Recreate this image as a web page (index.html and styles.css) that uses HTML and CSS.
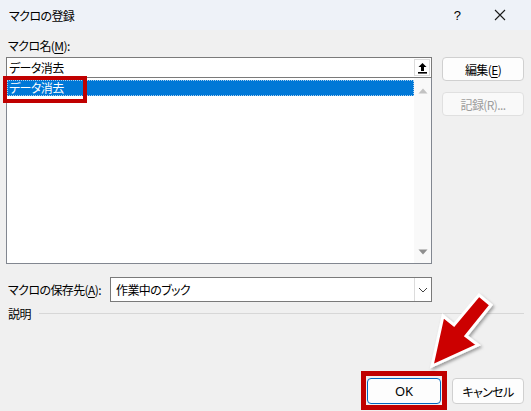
FILE: index.html
```html
<!DOCTYPE html>
<html lang="ja">
<head>
<meta charset="utf-8">
<title>マクロの登録</title>
<link rel="stylesheet" href="styles.css">
</head>
<body>
<div class="window">
  <div class="titlebar">
    <div class="title">マクロの登録</div>
    <div class="tb-btn help">?</div>
    <div class="tb-btn close">
      <svg width="12" height="12" viewBox="0 0 12 12"><path d="M1 1L11 11M11 1L1 11" stroke="#1a1a1a" stroke-width="1.1" fill="none"/></svg>
    </div>
  </div>
  <div class="content">
    <div class="label">マクロ名(<u>M</u>):</div>
    <div class="main">
      <div class="left">
        <div class="input">
          <span class="input-text">データ消去</span>
          <div class="collapse-btn">
            <svg width="11" height="12" viewBox="0 0 11 12"><path d="M5.5 1L1.5 5H4V9H7V5H9.5Z" fill="#000"/><rect x="1" y="10" width="9" height="1.6" fill="#000"/></svg>
          </div>
        </div>
        <div class="list">
          <div class="items">
            <div class="item selected">データ消去</div>
          </div>
          <div class="scrollbar">
            <svg width="10" height="6" viewBox="0 0 10 6"><path d="M5 0.5L9.5 5.5H0.5Z" fill="#c2c2c2"/></svg>
            <svg width="10" height="6" viewBox="0 0 10 6"><path d="M5 5.5L9.5 0.5H0.5Z" fill="#8f8f8f"/></svg>
          </div>
        </div>
      </div>
      <div class="right">
        <div class="btn">編集(<u>E</u>)</div>
        <div class="btn disabled">記録(R)...</div>
      </div>
    </div>
    <div class="store-row">
      <div class="store-label">マクロの保存先(<u>A</u>):</div>
      <div class="combo">
        <span class="combo-text">作業中のブック</span>
        <div class="combo-btn">
          <svg width="10" height="6" viewBox="0 0 10 6"><path d="M1 1L5 5L9 1" stroke="#444" stroke-width="1" fill="none"/></svg>
        </div>
      </div>
    </div>
    <div class="desc-row">
      <span>説明</span>
      <div class="desc-line"></div>
    </div>
  </div>
  <div class="footer">
    <div class="btn ok">OK</div>
    <div class="btn cancel">キャンセル</div>
  </div>

  <div class="mark mark-item"></div>
  <div class="mark mark-ok"></div>
  <svg class="arrow" width="531" height="411" viewBox="0 0 531 411">
    <defs>
      <filter id="sh" x="-20%" y="-20%" width="140%" height="140%">
        <feDropShadow dx="1.5" dy="2" stdDeviation="1.5" flood-color="#000" flood-opacity="0.35"/>
      </filter>
    </defs>
    <polygon points="432,366 443,316 454,325 479,295 491,305 466,336 478,345" fill="#cc0000" stroke="#fff" stroke-width="3" stroke-linejoin="miter" filter="url(#sh)"/>
  </svg>
</div>
</body>
</html>
```
FILE: styles.css
```css
* { box-sizing: border-box; }
body {
  margin: 0;
  background: #f0f0f0;
  font-family: "Noto Sans CJK JP", "Noto Sans", sans-serif;
  font-size: 12px;
  color: #000;
  font-feature-settings: "palt";
  letter-spacing: -0.6px;
}
u { text-underline-offset: 2px; }
.window {
  position: relative;
  width: 531px;
  height: 411px;
  display: flex;
  flex-direction: column;
  background: #f0f0f0;
  overflow: hidden;
}
.titlebar {
  height: 30px;
  background: #eef2f8;
  display: flex;
  align-items: center;
  padding-left: 9px;
  padding-right: 8px;
}
.title { flex: 1; font-size: 12px; }
.tb-btn {
  height: 30px;
  display: flex;
  align-items: center;
  justify-content: center;
}
.help { width: 40px; font-family: "Liberation Sans", sans-serif; font-size: 13px; }
.close { width: 46px; }
.content {
  padding: 0 7px 0 6px;
}
.label {
  margin-top: 8px;
  height: 16px;
  line-height: 16px;
  padding-left: 2px;
}
.main {
  display: flex;
  margin-top: 3px;
}
.left { width: 426px; }
.input {
  height: 21px;
  background: #fff;
  border: 1px solid #7a7a7a;
  display: flex;
  align-items: center;
  padding-left: 2px;
  padding-right: 1px;
}
.input-text { flex: 1; }
.collapse-btn {
  width: 16px;
  height: 17px;
  background: #fff;
  border: 1px solid #dcdcdc;
  display: flex;
  align-items: center;
  justify-content: center;
}
.list {
  height: 186px;
  background: #fff;
  border: 1px solid #828790;
  border-top: none;
  display: flex;
  padding-top: 2px;
}
.items { flex: 1; }
.item {
  height: 16px;
  line-height: 16px;
  padding-left: 2px;
}
.item.selected {
  background: #0078d7;
  color: #fff;
  outline: 1px dotted #a8d0f0;
  outline-offset: -1px;
}
.scrollbar {
  width: 17px;
  background: #f9f9f9;
  display: flex;
  flex-direction: column;
  justify-content: space-between;
  align-items: center;
  padding: 10px 0 8px;
  margin-top: -2px;
}
.right {
  margin-left: 10px;
  width: 82px;
  display: flex;
  flex-direction: column;
  gap: 11px;
}
.btn {
  height: 24px;
  background: #fdfdfd;
  border: 1px solid #d0d0d0;
  border-radius: 4px;
  display: flex;
  align-items: center;
  justify-content: center;
}
.btn.disabled { color: #9d9d9d; border-color: #e0e0e0; background: #f9f9f9; }
.store-row {
  display: flex;
  align-items: center;
  margin-top: 13px;
}
.store-label { width: 104px; padding-left: 2px; }
.combo {
  width: 322px;
  height: 25px;
  background: #fff;
  border: 1px solid #7a7a7a;
  display: flex;
  align-items: center;
  padding-left: 5px;
}
.combo-text { flex: 1; }
.combo-btn {
  width: 17px;
  height: 23px;
  border-left: 1px solid #dcdcdc;
  display: flex;
  align-items: center;
  justify-content: center;
}
.desc-row {
  display: flex;
  align-items: center;
  margin-top: 2px;
  height: 18px;
  padding-left: 2px;
}
.desc-line {
  flex: 1;
  height: 1px;
  background: #d7d7d7;
  margin-left: 8px;
}
.footer {
  margin-top: auto;
  display: flex;
  justify-content: flex-end;
  gap: 11px;
  padding: 0 7px 7px 0;
}
.footer .btn { height: 26px; }
.ok {
  width: 74px;
  border: 1px solid #0067c0;
  letter-spacing: 0;
  font-family: "Noto Sans", sans-serif;
  font-size: 13px;
}
.cancel { width: 72px; }
.mark {
  position: absolute;
  border: 4px solid #c00000;
}
.mark-item { left: 3px; top: 76px; width: 84px; height: 27px; }
.mark-ok { left: 361px; top: 371px; width: 86px; height: 39px; border-width: 5px; }
.arrow { position: absolute; left: 0; top: 0; pointer-events: none; }
```
